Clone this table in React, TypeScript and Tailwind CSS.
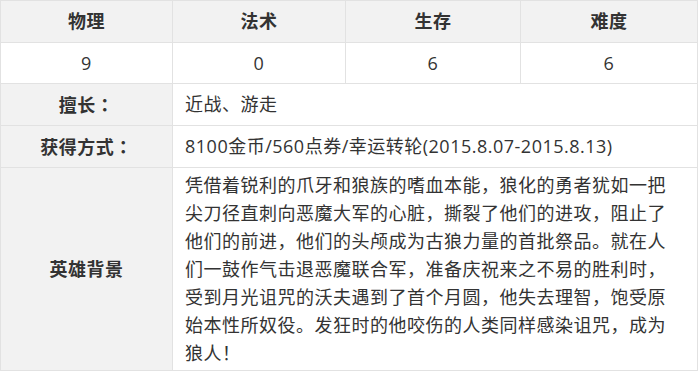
import React from "react";

const font = { fontFamily: '"Open Sans", "Noto Sans CJK SC", sans-serif' };
const tc = { fontFamily: '"Noto Sans CJK TC", sans-serif' };

export default function App() {
  const cell = "border border-[#e2e2e2] text-[18px] tracking-[0.5px] text-[#333]";
  return (
    <div className="w-[700px] h-[375px] bg-white" style={font}>
      <table className="table-fixed border-collapse w-[697px]">
        <colgroup>
          <col className="w-[172px]" />
          <col className="w-[173px]" />
          <col className="w-[175px]" />
          <col className="w-[177px]" />
        </colgroup>
        <tbody>
          <tr className="h-[42px] bg-[#f2f2f2]">
            {["物理", "法术", "生存", "难度"].map((t) => (
              <td key={t} className={`${cell} text-center font-bold`}>{t}</td>
            ))}
          </tr>
          <tr className="h-[41px] bg-white">
            {["9", "0", "6", "6"].map((t, i) => (
              <td key={i} className={`${cell} text-center`}>{t}</td>
            ))}
          </tr>
          <tr className="h-[42px]">
            <td className={`${cell} bg-[#f2f2f2] text-center font-bold`} style={tc}>擅长：</td>
            <td colSpan={3} className={`${cell} bg-white pl-3`}>近战、游走</td>
          </tr>
          <tr className="h-[42px]">
            <td className={`${cell} bg-[#f2f2f2] text-center font-bold`} style={tc}>获得方式：</td>
            <td colSpan={3} className={`${cell} bg-white pl-3`}>8100金币/560点券/幸运转轮(2015.8.07-2015.8.13)</td>
          </tr>
          <tr>
            <td className={`${cell} bg-[#f2f2f2] text-center font-bold`}>英雄背景</td>
            <td colSpan={3} className={`${cell} bg-white pl-3 pr-5 py-[3px] leading-[28px]`}>
              凭借着锐利的爪牙和狼族的嗜血本能，狼化的勇者犹如一把尖刀径直刺向恶魔大军的心脏，撕裂了他们的进攻，阻止了他们的前进，他们的头颅成为古狼力量的首批祭品。就在人们一鼓作气击退恶魔联合军，准备庆祝来之不易的胜利时，受到月光诅咒的沃夫遇到了首个月圆，他失去理智，饱受原始本性所奴役。发狂时的他咬伤的人类同样感染诅咒，成为狼人！
            </td>
          </tr>
        </tbody>
      </table>
    </div>
  );
}
